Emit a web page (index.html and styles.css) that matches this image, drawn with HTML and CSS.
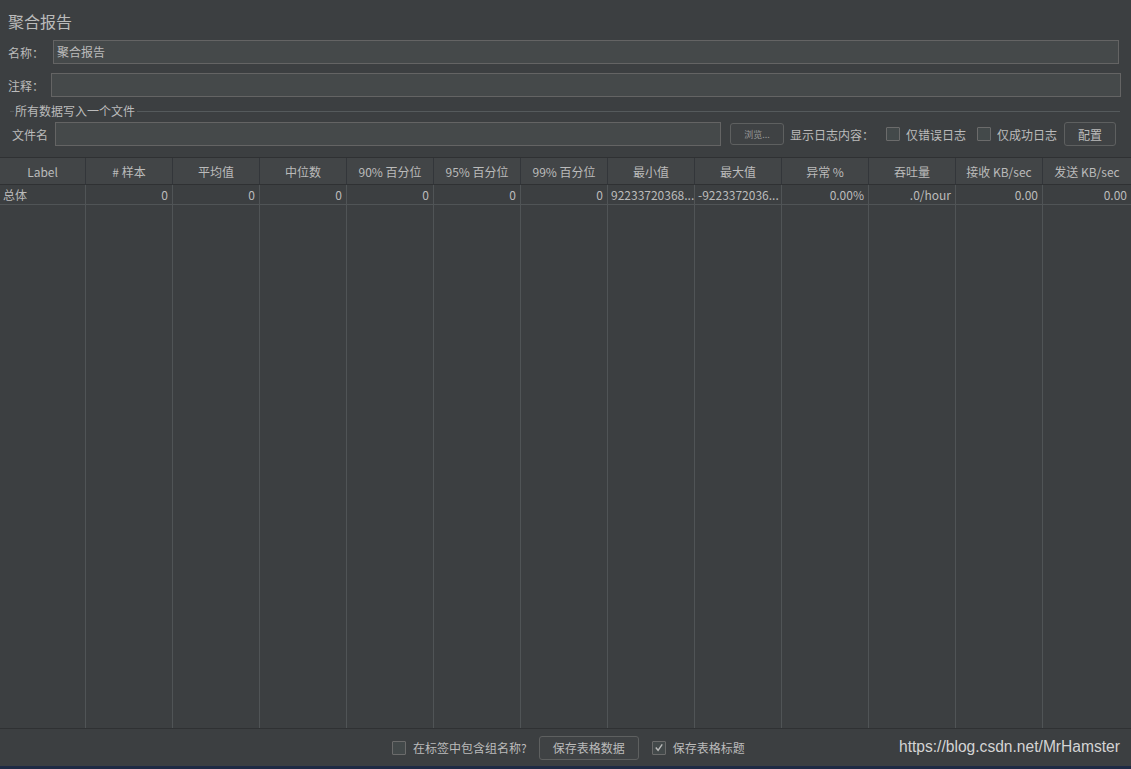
FILE: index.html
```html
<!DOCTYPE html>
<html lang="zh">
<head>
<meta charset="utf-8">
<title>聚合报告</title>
<link rel="stylesheet" href="styles.css">
</head>
<body>
<div class="page">
  <div class="top">
    <div class="title">聚合报告</div>
    <div class="row name-row">
      <span class="lbl lbl-name">名称：</span>
      <div class="input">聚合报告</div>
    </div>
    <div class="row comment-row">
      <span class="lbl lbl-comment">注释：</span>
      <div class="input"></div>
    </div>
    <div class="legend">
      <span class="dash"></span>
      <span class="legend-text">所有数据写入一个文件</span>
      <span class="legend-line"></span>
    </div>
    <div class="row file-row">
      <span class="lbl lbl-file">文件名</span>
      <div class="input file-input"></div>
      <button class="btn btn-browse">浏览...</button>
      <span class="log-lbl">显示日志内容：</span>
      <span class="check"></span><span class="check-text">仅错误日志</span>
      <span class="check"></span><span class="check-text">仅成功日志</span>
      <button class="btn btn-config">配置</button>
    </div>
  </div>

  <div class="table">
    <div class="th">Label</div>
    <div class="th"># 样本</div>
    <div class="th">平均值</div>
    <div class="th">中位数</div>
    <div class="th">90% 百分位</div>
    <div class="th">95% 百分位</div>
    <div class="th">99% 百分位</div>
    <div class="th">最小值</div>
    <div class="th">最大值</div>
    <div class="th">异常 %</div>
    <div class="th">吞吐量</div>
    <div class="th">接收 KB/sec</div>
    <div class="th">发送 KB/sec</div>

    <div class="td left">总体</div>
    <div class="td">0</div>
    <div class="td">0</div>
    <div class="td">0</div>
    <div class="td">0</div>
    <div class="td">0</div>
    <div class="td">0</div>
    <div class="td">92233720368...</div>
    <div class="td left">-9223372036...</div>
    <div class="td">0.00%</div>
    <div class="td">.0/hour</div>
    <div class="td">0.00</div>
    <div class="td">0.00</div>

    <div class="fill"></div><div class="fill"></div><div class="fill"></div><div class="fill"></div>
    <div class="fill"></div><div class="fill"></div><div class="fill"></div><div class="fill"></div>
    <div class="fill"></div><div class="fill"></div><div class="fill"></div><div class="fill"></div>
    <div class="fill"></div>
  </div>

  <div class="bottom">
    <span class="check"></span><span class="check-text">在标签中包含组名称?</span>
    <button class="btn btn-save">保存表格数据</button>
    <span class="check checked"><svg viewBox="0 0 13 13" width="13" height="13"><path d="M3 6.5 L5.5 9.5 L10 3" fill="none" stroke="#bbbbbb" stroke-width="1.5"/></svg></span><span class="check-text">保存表格标题</span>
    <span class="watermark">https://blog.csdn.net/MrHamster</span>
  </div>
  <div class="taskbar"></div>
</div>
</body>
</html>
```
FILE: styles.css
```css
* { box-sizing: border-box; }
html, body {
  margin: 0;
  padding: 0;
  background: #3c3f41;
}
body {
  font-family: "Noto Sans CJK SC", "Noto Sans", sans-serif;
  font-size: 12px;
  color: #bbbbbb;
}
.page {
  width: 1131px;
  height: 769px;
  display: flex;
  flex-direction: column;
  overflow: hidden;
}
.title {
  padding: 9px 0 0 8px;
  height: 40px;
  font-size: 16px;
  line-height: 24px;
}
.row {
  display: flex;
  align-items: center;
  height: 24px;
}
.lbl {
  font-size: 12px;
  flex: none;
}
.name-row { padding: 0 12px 0 8px; }
.lbl-name { width: 45px; }
.comment-row { margin-top: 9px; padding: 0 10px 0 8px; }
.lbl-comment { width: 43px; }
.input {
  flex: 1;
  height: 24px;
  background: #45494a;
  border: 1px solid #646464;
  padding: 0 3px;
  line-height: 22px;
  font-size: 12px;
  color: #bbbbbb;
}
.legend {
  display: flex;
  align-items: center;
  height: 14px;
  margin: 7px 11px 0 10px;
}
.dash {
  width: 4px;
  height: 1px;
  background: #555a5c;
}
.legend-text {
  padding: 0 2px 0 1px;
  line-height: 14px;
}
.legend-line {
  flex: 1;
  height: 1px;
  background: #555a5c;
}
.file-row {
  margin-top: 4px;
  padding-left: 12px;
}
.lbl-file { width: 43px; }
.file-input { flex: none; width: 666px; }
.btn {
  font-family: "Noto Sans CJK SC", "Noto Sans", sans-serif;
  background: #3f4244;
  border: 1px solid #5e6060;
  border-radius: 3px;
  color: #bbbbbb;
  padding: 0;
  flex: none;
}
.btn-browse {
  margin-left: 9px;
  width: 54px;
  height: 22px;
  font-size: 9px;
  color: #999999;
}
.log-lbl { margin-left: 6px; width: 96px; white-space: nowrap; }
.check {
  flex: none;
  width: 14px;
  height: 14px;
  border: 1px solid #6b6b6b;
  background: #43494a;
  border-radius: 1px;
  display: inline-flex;
  align-items: center;
  justify-content: center;
}
.check svg { display: block; }
.check-text { margin-left: 6px; margin-right: 11px; white-space: nowrap; }
.bottom .check-text { margin-left: 7px; margin-right: 12px; }
.btn-config {
  margin-left: -4px;
  width: 52px;
  height: 24px;
  font-size: 12px;
}
.table {
  margin-top: 11px;
  flex: 1;
  display: grid;
  grid-template-columns: 86px repeat(11, 87px) 1fr;
  grid-template-rows: 27px 20px 1fr;
  border-top: 1px solid #2f3133;
}
.th {
  background: #424547;
  border-right: 1px solid #33363a;
  border-bottom: 1px solid #2f3133;
  display: flex;
  align-items: center;
  justify-content: center;
  font-size: 12px;
  white-space: nowrap;
}
.th:nth-child(13) { border-right: none; }
.td {
  border-right: 1px solid #505456;
  border-bottom: 1px solid #505456;
  text-align: right;
  padding: 0 4px 0 3px;
  line-height: 19px;
  font-size: 12px;
  white-space: nowrap;
  overflow: hidden;
}
.td.left { text-align: left; }
.td:nth-child(26) { border-right: none; }
.fill {
  border-right: 1px solid #505456;
}
.fill:nth-child(39) { border-right: none; }
.bottom {
  height: 38px;
  border-top: 1px solid #2f3133;
  display: flex;
  align-items: center;
  padding-left: 392px;
  position: relative;
}
.btn-save {
  margin-left: 0;
  margin-right: 13px;
  width: 100px;
  height: 24px;
  font-size: 12px;
}
.watermark {
  position: absolute;
  right: 11px;
  top: 9px;
  font-family: "Liberation Sans", Arial, sans-serif;
  font-size: 15.6px;
  color: #d4d4d4;
}
.taskbar {
  height: 3px;
  background: #1e2a44;
}
```
